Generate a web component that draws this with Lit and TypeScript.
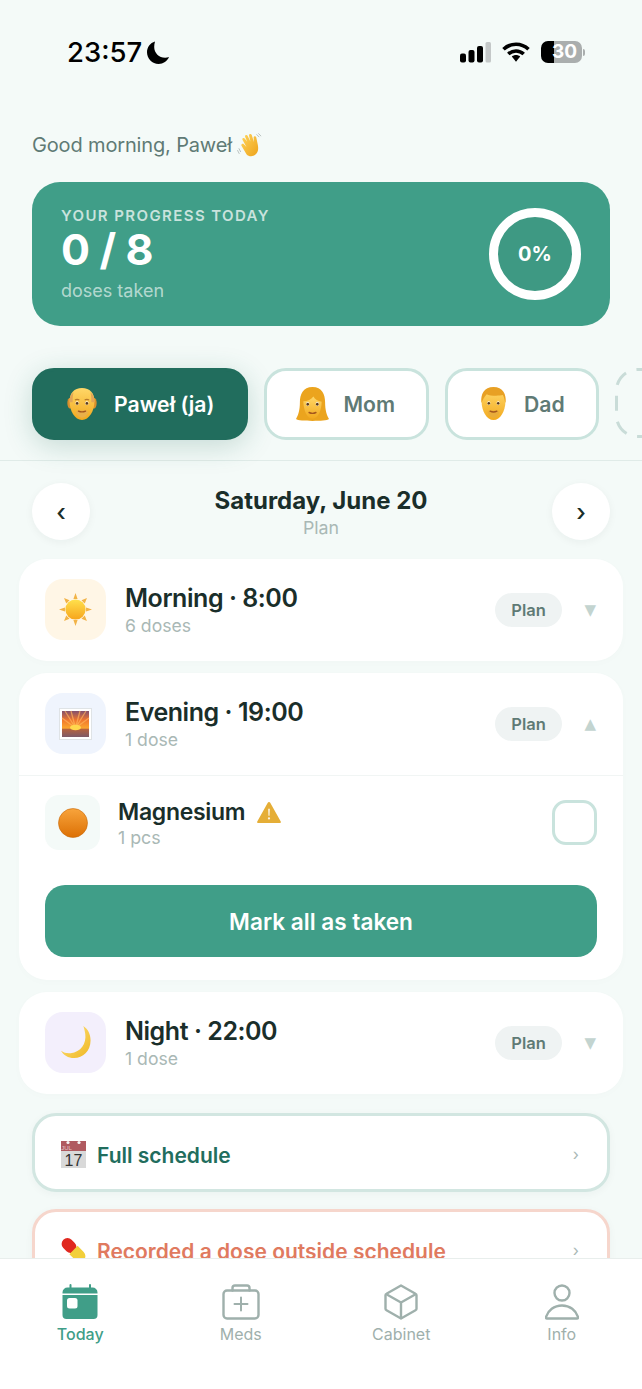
import {LitElement, html, css, svg} from "lit";
import {customElement} from "lit/decorators.js";

const moonIcon = html`<svg class="st-moon" width="22" height="23" viewBox="0 0 22 23"><path fill="#000" d="M8 .5C3.200 2 0 6.300 0 11.300 0 17.700 5.200 23 11.600 23c4.700 0 8.700-2.800 10.400-6.900-1.200.5-2.500.7-3.900.7C12.100 16.800 7.200 12 7.200 6c0-2 .3-3.800.8-5.500z"/></svg>`;

const signalIcon = html`<svg width="32" height="21" viewBox="0 0 32 21"><rect x="1" y="11.500" width="6" height="9" rx="2" fill="#000"/><rect x="9.500" y="8" width="6" height="12.500" rx="2" fill="#000"/><rect x="18" y="4" width="6" height="16.500" rx="2" fill="#000"/><rect x="26.500" y="0" width="5.500" height="20.500" rx="1.500" fill="#c4c8c8"/></svg>`;

const wifiIcon = html`<svg width="28" height="20" viewBox="0 0 28 20"><path fill="none" stroke="#000" stroke-width="3.600" d="M1.500 7.300C8.500.6 19.500.6 26.500 7.300"/><path fill="none" stroke="#000" stroke-width="3.600" d="M6.300 12C10.700 7.900 17.300 7.900 21.700 12"/><path fill="#000" d="M9.800 14.400c2.500-2 5.900-2 8.400 0L14 19.800z"/></svg>`;

const waveEmoji = html`<svg width="26" height="27" viewBox="0 0 28 28">
  <defs><linearGradient id="w1" x1="0" y1="0" x2="1" y2="1"><stop offset="0" stop-color="#ffd45a"/><stop offset="1" stop-color="#eda31c"/></linearGradient></defs>
  <path stroke="#b4bdbb" stroke-width="1" d="M2 17l2 4M0.500 19l2 4M21 2l3 3M23 1l3 3" fill="none"/>
  <path fill="url(#w1)" d="M6 8c-1-1.700 1.100-3 2.300-1.500L11 10 8.800 4.800c-.7-1.800 1.700-2.800 2.600-1.200l3 6-1.400-6.100c-.4-1.900 2.200-2.500 2.900-.7l2.300 7.300-.3-4.600c-.1-1.800 2.300-2.200 2.800-.4l1.700 8.200c.9 4.500.3 8-2.500 10.500-3 2.600-7.400 2.300-9.700-.5L5 14.500c-1.200-1.600.9-3.300 2.400-1.900l2.800 3z"/>
</svg>`;

const faceDefs = (id: string) => svg`<defs><linearGradient id=${id} x1="0" y1="0" x2="0" y2="1"><stop offset="0" stop-color="#ffd768"/><stop offset="1" stop-color="#f2a91e"/></linearGradient></defs>`;

const faceFeatures = svg`
  <ellipse cx="12.500" cy="18" rx="1.800" ry="2.100" fill="#fff"/><ellipse cx="23.500" cy="18" rx="1.800" ry="2.100" fill="#fff"/>
  <circle cx="12.500" cy="18.300" r="1.500" fill="#5b3a1a"/><circle cx="23.500" cy="18.300" r="1.500" fill="#5b3a1a"/>
  <path d="M14 27q4 1.800 8 0" stroke="#a4561c" stroke-width="1.500" fill="none" stroke-linecap="round"/>`;

const oldManEmoji = html`<svg width="32" height="34" viewBox="0 0 36 38">
  ${faceDefs("f1")}
  <ellipse cx="4.500" cy="18" rx="3" ry="6" fill="#d98e2c"/><ellipse cx="31.500" cy="18" rx="3" ry="6" fill="#d98e2c"/>
  <path fill="url(#f1)" d="M18 1C9 1 4 7 4 16c0 11 6 21 14 21s14-10 14-21C32 7 27 1 18 1z"/>
  <path fill="#e2a556" d="M4 17c0-6 1.500-9 4.500-11 -1 3-1 7-1 11zM32 17c0-6-1.500-9-4.500-11 1 3 1 7 1 11z"/>
  <path d="M10 14.500q2.500-1.500 5 0M21 14.500q2.500-1.500 5 0" stroke="#b87a2a" stroke-width="1.300" fill="none"/>
  <path fill="#e9b04a" d="M11 28c2-2.200 5-2.500 7-1.500 2-1 5-.7 7 1.500-1.500 4-4 6.500-7 6.500s-5.500-2.500-7-6.500z"/>
  ${faceFeatures}
</svg>`;

const womanEmoji = html`<svg class="wide" width="33" height="34" viewBox="0 0 38 36" preserveAspectRatio="none">
  ${faceDefs("f2")}
  <path fill="#eba41e" d="M19 0C8 0 4.500 8 4.500 16c0 9-2 14-4.500 18 2 1.500 10 2 19 2s17-.5 19-2c-2.500-4-4.500-9-4.500-18C33.500 8 30 0 19 0z"/>
  <path fill="url(#f2)" d="M8.500 15c5 0 9-2 11.500-5 2 3 5 5 9.500 5.500 0 9-4 18-10.500 18S8.500 24 8.500 15z"/>
  <g transform="translate(1 0)">${faceFeatures}</g>
</svg>`;

const manEmoji = html`<svg width="29" height="34" viewBox="0 0 34 38" preserveAspectRatio="none">
  ${faceDefs("f3")}
  <path fill="url(#f3)" d="M3 16C3 27 9 37 17 37s14-10 14-21C31 6 26 3 17 3S3 6 3 16z"/>
  <path fill="#e8a024" d="M3 18C1.500 8 6 0 17 0s15.500 8 14 18c-1-3-1.500-7-3-9-5 1-15 1-19-1-3 3-5 7-6 10z"/>
  <path fill="#e9ac3a" d="M10 28c2-2.200 5-2.500 7-1.500 2-1 5-.7 7 1.500-1.500 4-4 6.500-7 6.500s-5.500-2.500-7-6.500z"/>
  <g transform="translate(-1 0)">${faceFeatures}</g>
</svg>`;

const addRing = html`<svg width="72" height="70" viewBox="0 0 72 70"><rect x="1.500" y="1.500" width="69" height="67" rx="21" fill="none" stroke="#c9dcd8" stroke-width="3" stroke-dasharray="15 11"/></svg>`;

const sunEmoji = html`<svg width="33" height="33" viewBox="0 0 36 36">
  <defs><linearGradient id="s1" x1="0" y1="0" x2="0" y2="1"><stop offset="0" stop-color="#ffe14d"/><stop offset="1" stop-color="#f7a51c"/></linearGradient></defs>
  <g fill="#f2b347"><path d="M18 0l2.300 6.500h-4.600zM18 36l-2.300-6.500h4.600zM0 18l6.500-2.300v4.600zM36 18l-6.500 2.300v-4.600zM5.500 5.500l6 2.400-3.600 3.600zM30.500 5.500l-2.400 6-3.600-3.600zM5.500 30.500l2.400-6 3.600 3.600zM30.500 30.500l-6-2.400 3.600-3.600z"/></g>
  <circle cx="18" cy="18" r="11" fill="url(#s1)"/>
</svg>`;

const sunsetEmoji = html`<svg width="33" height="32" viewBox="0 0 33 32">
  <defs><linearGradient id="ss" x1="0" y1="0" x2="0" y2="1"><stop offset="0" stop-color="#82506e"/><stop offset=".35" stop-color="#f0762e"/><stop offset=".66" stop-color="#fba52e"/><stop offset=".7" stop-color="#b5623e"/><stop offset="1" stop-color="#7d5a68"/></linearGradient></defs>
  <rect x=".5" y=".5" width="32" height="31" fill="#fff" stroke="#dfe3e6"/>
  <rect x="3" y="3" width="27" height="26" fill="url(#ss)"/>
  <path d="M16.500 20L6 3M16.500 20L12 3M16.500 20L21 3M16.500 20L27 3M16.500 20L3 10M16.500 20L30 10" stroke="#ffb35c" stroke-width="1.300" opacity=".7"/>
  <ellipse cx="16.500" cy="19.500" rx="5.500" ry="2.800" fill="#ffd84d"/>
</svg>`;

const crescentEmoji = html`<svg width="32" height="33" viewBox="0 0 32 34">
  <defs><linearGradient id="c1" x1="0" y1="0" x2="1" y2="1"><stop offset="0" stop-color="#ffe680"/><stop offset="1" stop-color="#efb622"/></linearGradient></defs>
  <path fill="url(#c1)" d="M23.500 0C28 3 31 8 31 15c0 11-8 18-17 18-6 0-11-3-13.500-7.500 3 2 6.500 3 10 2.500C21 27 27 18 25.500 8c-.4-3-1-5.500-2-8z"/>
</svg>`;

const orangeEmoji = html`<svg width="30" height="30" viewBox="0 0 30 30">
  <defs><linearGradient id="o1" x1="0" y1="0" x2="0" y2="1"><stop offset="0" stop-color="#f8a43c"/><stop offset="1" stop-color="#dc7004"/></linearGradient></defs>
  <circle cx="15" cy="15" r="14.500" fill="url(#o1)" stroke="#c96a0a" stroke-width=".6"/>
</svg>`;

const warnEmoji = html`<svg width="24" height="21" viewBox="0 0 25 22"><path fill="#e5ae37" d="M12.500 0c.6 0 1 .3 1.300.8l11 19.500c.4.8-.1 1.700-1 1.700H1.200c-.9 0-1.400-.9-1-1.700l11-19.500c.3-.5.700-.8 1.300-.8z"/><path fill="#fff" opacity=".85" d="M11.600 7h1.800l-.3 7.500h-1.200zM12.500 16a1.200 1.200 0 110 2.400 1.200 1.200 0 010-2.400z"/></svg>`;

const calendarEmoji = html`<svg width="27" height="28" viewBox="0 0 27 28">
  <rect x="1" y="1" width="25" height="10" fill="#b05a60"/>
  <rect x="1" y="11" width="25" height="17" fill="#d9d9d9"/>
  <circle cx="8" cy="2.500" r="1.600" fill="#f4f4f4"/><circle cx="19" cy="2.500" r="1.600" fill="#f4f4f4"/>
  <text class="cal-mon" x="6.500" y="9.500" text-anchor="middle">JUL</text>
  <text class="cal-num" x="13.500" y="25.500" text-anchor="middle">17</text>
</svg>`;

const pillEmoji = html`<svg width="27" height="30" viewBox="0 0 30 30">
  <g transform="rotate(45 15 15)"><rect x="-1" y="8.500" width="18" height="13" rx="6.500" fill="#e0281f"/><path d="M15 8.500h9.500a6.500 6.500 0 010 13H15z" fill="#f2cf3a"/></g>
</svg>`;

const todayIcon = html`<svg width="36" height="36" viewBox="0 0 36 36" fill="#409e88">
  <rect x="7.500" y="0" width="2" height="5" rx="1"/><rect x="27" y="0" width="2" height="5" rx="1"/>
  <path d="M.500 8.500a5 5 0 015-5h25a5 5 0 015 5v1H.500z"/>
  <path d="M.500 11h35v20a4 4 0 01-4 4h-27a4 4 0 01-4-4z"/>
  <rect x="5" y="14" width="10.500" height="10.500" rx="2.500" fill="#fff"/>
</svg>`;

const medsIcon = html`<svg width="38" height="36" viewBox="0 0 38 36" fill="none" stroke="#9fb0ac" stroke-width="2.400" stroke-linejoin="round" stroke-linecap="round">
  <rect x="1.500" y="6.500" width="35" height="28" rx="3.500"/>
  <path d="M10.500 6.500V4a2.500 2.500 0 012.500-2.500h12A2.500 2.500 0 0127.500 4v2.500"/>
  <path d="M19 13.500v13M12.500 20h13" stroke-width="2"/>
</svg>`;

const cabinetIcon = html`<svg width="34" height="36" viewBox="0 0 34 36" fill="none" stroke="#9fb0ac" stroke-width="2.400" stroke-linejoin="round">
  <path d="M17 1.500L31.500 9.800c.6.300 1 .8 1 1.500v13.400c0 .7-.4 1.200-1 1.500L17 34.500 2.500 26.200c-.6-.3-1-.8-1-1.500V11.300c0-.7.4-1.200 1-1.500z"/>
  <path d="M2 10l15 8.500L32 10M17 18.500v16"/>
</svg>`;

const infoIcon = html`<svg width="34" height="36" viewBox="0 0 34 36" fill="none" stroke="#9fb0ac" stroke-width="2.400" stroke-linejoin="round">
  <circle cx="17" cy="9" r="7.500"/>
  <path d="M2 34.500h30c1 0 1.300-.6 1-1.500C31 26.500 25 21.500 17 21.500S3 26.500 1 33c-.3.900 0 1.500 1 1.500z"/>
</svg>`;

@customElement("app-root")
export class AppRoot extends LitElement {
  static styles = css`
    :host {
      display: flex;
      flex-direction: column;
      width: 642px;
      height: 1389px;
      overflow: hidden;
      background: #f4faf8;
      font-family: Inter, "Liberation Sans", sans-serif;
      color: #1a2e2a;
    }
    main {
      flex: 1;
      min-height: 0;
      overflow: hidden;
    }
    svg {
      display: block;
      flex-shrink: 0;
    }
    .status {
      height: 104px;
      box-sizing: border-box;
      padding: 0 57px 0 67px;
      display: flex;
      align-items: center;
      color: #000;
    }
    .time {
      font-size: 27.500px;
      font-weight: 500;
    }
    .st-moon {
      margin-left: 5px;
    }
    .st-right {
      margin-left: auto;
      display: flex;
      align-items: center;
      gap: 11px;
    }
    .battery {
      display: flex;
      align-items: center;
    }
    .batt-body {
      width: 41px;
      height: 22px;
      border-radius: 7px;
      background: linear-gradient(90deg, #000 13px, #aaaeae 13px);
      color: #fff;
      font-size: 19px;
      font-weight: 700;
      line-height: 22px;
      text-align: center;
      padding-left: 6px;
      box-sizing: border-box;
    }
    .batt-nub {
      width: 2px;
      height: 7px;
      margin-left: 1px;
      border-radius: 0 2px 2px 0;
      background: #aaaeae;
    }
    .greeting {
      display: flex;
      align-items: center;
      gap: 5px;
      height: 24px;
      margin: 29px 0 25px;
      padding-left: 32px;
      font-size: 20px;
      letter-spacing: -0.15px;
      color: #5f7a75;
    }
    .hero {
      height: 144px;
      box-sizing: border-box;
      margin: 0 32px;
      padding: 0 29px;
      border-radius: 28px;
      background: #409e88;
      display: flex;
      align-items: center;
      justify-content: space-between;
      color: #fff;
    }
    .hero-label {
      font-size: 15px;
      font-weight: 600;
      letter-spacing: 1.4px;
      line-height: 18px;
      color: rgba(255, 255, 255, 0.72);
    }
    .hero-count {
      font-size: 43px;
      font-weight: 700;
      line-height: 44px;
      letter-spacing: -0.4px;
      margin-top: 2px;
    }
    .hero-sub {
      font-size: 18px;
      line-height: 21px;
      margin-top: 8.500px;
      color: rgba(255, 255, 255, 0.62);
    }
    .ring {
      width: 92px;
      height: 92px;
      box-sizing: border-box;
      border: 9px solid #fff;
      border-radius: 50%;
      display: flex;
      align-items: center;
      justify-content: center;
      background: rgba(0, 0, 0, 0.03);
      font-size: 20px;
      font-weight: 700;
    }
    .people {
      display: flex;
      gap: 16px;
      padding: 42px 0 20px 32px;
      border-bottom: 1px solid #e0ebe8;
    }
    .chip {
      flex-shrink: 0;
      height: 72px;
      box-sizing: border-box;
      padding: 0 31px;
      border: 3px solid #c9e3dd;
      border-radius: 22px;
      background: #fff;
      display: flex;
      align-items: center;
      gap: 16px;
      font-size: 21.200px;
      font-weight: 600;
      color: #5f7a75;
    }
    .chip .wide {
      margin: 0 -2px 0 -2px;
    }
    .chip.active {
      border-color: #216d5d;
      background: #216d5d;
      color: #fff;
      box-shadow: 0 6px 28px rgba(33, 109, 93, 0.22);
    }
    .add-ring {
      flex-shrink: 0;
    }
    .day {
      display: flex;
      align-items: center;
      justify-content: space-between;
      padding: 22px 32px 19px;
    }
    .day-nav {
      width: 58px;
      height: 57px;
      border-radius: 50%;
      background: #fff;
      box-shadow: 0 2px 8px rgba(26, 46, 42, 0.05);
      display: flex;
      align-items: center;
      justify-content: center;
      font-size: 24px;
      font-weight: 500;
      line-height: 1;
      padding-top: 3px;
      box-sizing: border-box;
      color: #1a2e2a;
    }
    .day-mid {
      text-align: center;
    }
    .day-title {
      font-size: 24px;
      font-weight: 700;
      line-height: 30px;
    }
    .day-sub {
      font-size: 17.800px;
      line-height: 21px;
      margin-top: 1px;
      color: #a9b8b5;
    }
    .slots {
      display: flex;
      flex-direction: column;
      gap: 12.500px;
      padding: 0 19px;
    }
    .slot {
      border-radius: 28px;
      background: #fff;
      box-shadow: 0 2px 10px rgba(26, 46, 42, 0.015);
    }
    .slot-head {
      height: 101.500px;
      box-sizing: border-box;
      padding: 0 26px;
      display: flex;
      align-items: center;
    }
    .slot-icon {
      width: 61px;
      height: 61px;
      border-radius: 18px;
      display: flex;
      align-items: center;
      justify-content: center;
      flex-shrink: 0;
    }
    .morning { background: #fff6e6; }
    .evening { background: #eff4fd; }
    .night { background: #f3effc; }
    .slot-text {
      flex: 1;
      margin-left: 19px;
    }
    .slot-title {
      font-size: 25px;
      font-weight: 600;
      line-height: 31px;
      letter-spacing: -0.45px;
    }
    .slot-sub {
      font-size: 17.600px;
      line-height: 21px;
      margin: 1px 0;
      color: #a9b8b5;
    }
    .pill {
      width: 67px;
      height: 34px;
      border-radius: 17px;
      background: #eff3f3;
      display: flex;
      align-items: center;
      justify-content: center;
      font-size: 16.500px;
      font-weight: 600;
      color: #5f7a75;
    }
    .caret {
      width: 35px;
      padding-right: 1px;
      box-sizing: border-box;
      text-align: right;
      font-family: "DejaVu Sans", sans-serif;
      font-size: 15px;
      color: #c3d4d0;
    }
    .dose {
      border-top: 1px solid #f1f5f4;
      padding: 19.500px 26px 22.500px;
    }
    .dose-row {
      display: flex;
      align-items: center;
    }
    .dose-icon {
      width: 55px;
      height: 55px;
      border-radius: 14px;
      background: #f4faf8;
      display: flex;
      align-items: center;
      justify-content: center;
    }
    .dose-text {
      flex: 1;
      margin-left: 18px;
    }
    .dose-name {
      display: flex;
      align-items: center;
      gap: 12px;
      font-size: 23px;
      font-weight: 600;
      line-height: 29px;
      letter-spacing: -0.3px;
    }
    .dose-sub {
      font-size: 17.800px;
      line-height: 21px;
      color: #a9b8b5;
    }
    .check {
      width: 45px;
      height: 45px;
      box-sizing: border-box;
      border: 3px solid #c9e3dd;
      border-radius: 14px;
    }
    .mark-all {
      height: 72px;
      margin-top: 35px;
      border-radius: 20px;
      background: #409e88;
      display: flex;
      align-items: center;
      justify-content: center;
      color: #fff;
      font-size: 22.600px;
      font-weight: 600;
    }
    .links {
      display: flex;
      flex-direction: column;
      gap: 17px;
      padding: 19.500px 32px 0;
    }
    .link {
      height: 79px;
      box-sizing: border-box;
      padding: 2px 28px 0 25px;
      border: 3px solid #d2e6e1;
      border-radius: 24px;
      background: #fff;
      box-shadow: 0 2px 8px rgba(26, 46, 42, 0.04);
      display: flex;
      align-items: center;
      gap: 10px;
      font-size: 21px;
      font-weight: 600;
      color: #216d5d;
    }
    .link.warn {
      border-color: #f6d6cc;
      color: #e07a5f;
    }
    .link-text {
      flex: 1;
      padding-top: 3px;
    }
    .link-arrow {
      font-size: 16px;
      font-weight: 400;
      color: #a9b8b5;
    }
    .cal-num {
      font-family: "Liberation Sans", sans-serif;
      font-size: 16px;
      font-weight: 400;
      fill: #333;
    }
    .cal-mon {
      font-family: "Liberation Sans", sans-serif;
      font-size: 6px;
      font-weight: 400;
      fill: #e6c4c6;
    }
    .tabs {
      height: 131px;
      box-sizing: border-box;
      flex-shrink: 0;
      padding: 25px 0 0;
      background: #fff;
      border-top: 1px solid #e8eeec;
      display: grid;
      grid-template-columns: repeat(4, 160.500px);
    }
    .tab {
      display: flex;
      flex-direction: column;
      align-items: center;
      gap: 4px;
      font-size: 16px;
      line-height: 20px;
      color: #9fb0ac;
    }
    .tab.active {
      color: #409e88;
      font-weight: 500;
    }
  `;

  renderSlot(title: string, sub: string, tone: string, icon: unknown, caret: string) {
    return html`
      <div class="slot-head">
        <div class="slot-icon ${tone}">${icon}</div>
        <div class="slot-text">
          <div class="slot-title">${title}</div>
          <div class="slot-sub">${sub}</div>
        </div>
        <div class="pill">Plan</div>
        <div class="caret">${caret}</div>
      </div>
    `;
  }

  render() {
    return html`
      <main>
        <div class="status">
          <span class="time">23:57</span>
          ${moonIcon}
          <div class="st-right">
            ${signalIcon} ${wifiIcon}
            <div class="battery">
              <div class="batt-body">30</div>
              <div class="batt-nub"></div>
            </div>
          </div>
        </div>
        <div class="greeting">Good morning, Paweł ${waveEmoji}</div>
        <section class="hero">
          <div>
            <div class="hero-label">YOUR PROGRESS TODAY</div>
            <div class="hero-count">0 / 8</div>
            <div class="hero-sub">doses taken</div>
          </div>
          <div class="ring">0%</div>
        </section>
        <div class="people">
          <div class="chip active">${oldManEmoji} Paweł (ja)</div>
          <div class="chip">${womanEmoji} Mom</div>
          <div class="chip">${manEmoji} Dad</div>
          <div class="add-ring">${addRing}</div>
        </div>
        <div class="day">
          <div class="day-nav">‹</div>
          <div class="day-mid">
            <div class="day-title">Saturday, June 20</div>
            <div class="day-sub">Plan</div>
          </div>
          <div class="day-nav">›</div>
        </div>
        <div class="slots">
          <div class="slot">${this.renderSlot("Morning · 8:00", "6 doses", "morning", sunEmoji, "▼")}</div>
          <div class="slot">
            ${this.renderSlot("Evening · 19:00", "1 dose", "evening", sunsetEmoji, "▲")}
            <div class="dose">
              <div class="dose-row">
                <div class="dose-icon">${orangeEmoji}</div>
                <div class="dose-text">
                  <div class="dose-name">Magnesium ${warnEmoji}</div>
                  <div class="dose-sub">1 pcs</div>
                </div>
                <div class="check"></div>
              </div>
              <div class="mark-all">Mark all as taken</div>
            </div>
          </div>
          <div class="slot">${this.renderSlot("Night · 22:00", "1 dose", "night", crescentEmoji, "▼")}</div>
        </div>
        <div class="links">
          <div class="link">
            ${calendarEmoji}
            <span class="link-text">Full schedule</span>
            <span class="link-arrow">›</span>
          </div>
          <div class="link warn">
            ${pillEmoji}
            <span class="link-text">Recorded a dose outside schedule</span>
            <span class="link-arrow">›</span>
          </div>
        </div>
      </main>
      <nav class="tabs">
        <div class="tab active">${todayIcon}<span>Today</span></div>
        <div class="tab">${medsIcon}<span>Meds</span></div>
        <div class="tab">${cabinetIcon}<span>Cabinet</span></div>
        <div class="tab">${infoIcon}<span>Info</span></div>
      </nav>
    `;
  }
}
